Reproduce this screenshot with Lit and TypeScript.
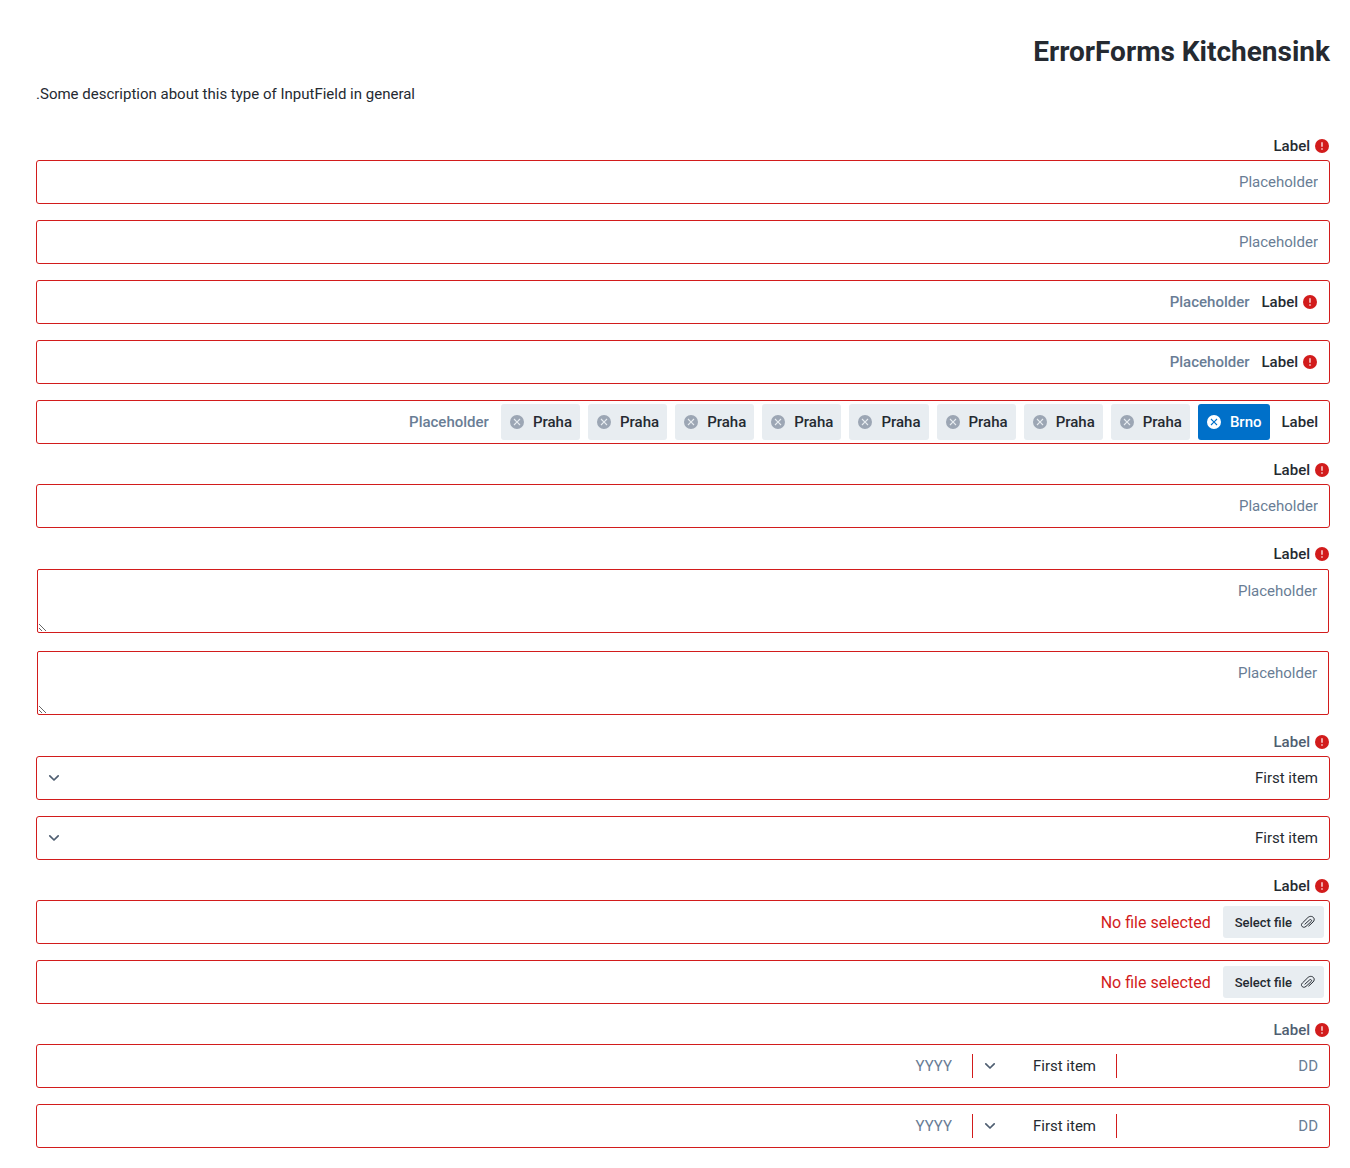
import { LitElement, html, css, nothing } from "lit";
import { customElement, property } from "lit/decorators.js";

const alertIcon = html`<svg class="icon alert" viewBox="0 0 24 24" aria-hidden="true">
  <circle cx="12" cy="12" r="10.5" fill="currentColor" />
  <path d="M12 6.5v6.8M12 15.2v2.3" stroke="#fff" stroke-opacity="0.85" stroke-width="2.2" fill="none" />
</svg>`;

const closeIcon = html`<svg class="icon" viewBox="0 0 24 24" aria-hidden="true">
  <path
    fill="currentColor"
    fill-rule="evenodd"
    d="M12 1.5a10.5 10.5 0 1 0 0 21 10.5 10.5 0 0 0 0-21zM8.1 6.9 12 10.8l3.9-3.9 1.2 1.2-3.9 3.9 3.9 3.9-1.2 1.2-3.9-3.9-3.9 3.9-1.2-1.2 3.9-3.9-3.9-3.9z"
  />
</svg>`;

const chevronIcon = html`<svg class="chevron" viewBox="0 0 24 24" aria-hidden="true">
  <path
    d="M7.8 9.8 12 14l4.2-4.2"
    fill="none"
    stroke="currentColor"
    stroke-width="1.7"
    stroke-linecap="round"
    stroke-linejoin="round"
  />
</svg>`;

const clipIcon = html`<svg class="icon" viewBox="0 0 24 24" aria-hidden="true">
  <path
    d="M7.4 15.2l7-6.3c1.900-1.700 4.200.700 2.400 2.400l-7.800 7.300c-4 3.700-9.400-1.300-5.500-5L11.800 5.400c5.600-5.100 13 1.400 7.700 6.600l-6.400 6"
    fill="none"
    stroke="currentColor"
    stroke-width="1.5"
    stroke-linecap="round"
    stroke-linejoin="round"
  />
</svg>`;

type Kind = "text" | "textarea" | "select" | "file" | "date";

interface Field {
  kind: Kind;
  label?: string;
  inline?: boolean;
  noIcon?: boolean;
  tags?: string[];
}

const FIELDS: Field[] = [
  { kind: "text", label: "Label" },
  { kind: "text" },
  { kind: "text", label: "Label", inline: true },
  { kind: "text", label: "Label", inline: true },
  {
    kind: "text",
    label: "Label",
    inline: true,
    noIcon: true,
    tags: ["Brno", "Praha", "Praha", "Praha", "Praha", "Praha", "Praha", "Praha", "Praha"],
  },
  { kind: "text", label: "Label" },
  { kind: "textarea", label: "Label" },
  { kind: "textarea" },
  { kind: "select", label: "Label" },
  { kind: "select" },
  { kind: "file", label: "Label" },
  { kind: "file" },
  { kind: "date", label: "Label" },
  { kind: "date" },
];

@customElement("form-field")
export class FormField extends LitElement {
  @property({ attribute: false }) field: Field = { kind: "text" };

  static styles = css`
    :host {
      display: block;
      font-family: Roboto, "Liberation Sans", sans-serif;
      font-size: 15px;
      line-height: 20px;
      color: #252a31;
    }
    .field {
      display: flex;
      flex-direction: column;
      gap: 4px;
    }
    .label {
      display: flex;
      align-items: center;
      gap: 4px;
      font-weight: 500;
      white-space: nowrap;
    }
    .label.light {
      color: #4f5e71;
    }
    .icon {
      display: block;
      flex: none;
      width: 16px;
      height: 16px;
    }
    .alert {
      color: #d21c1c;
    }
    .box {
      display: flex;
      align-items: center;
      box-sizing: border-box;
      min-height: 44px;
      border: 1px solid #d21c1c;
      border-radius: 3px;
      background: #fff;
    }
    .box.inline {
      padding-inline-start: 11px;
    }
    input,
    select,
    textarea,
    button {
      font: inherit;
      color: inherit;
      margin: 0;
    }
    input,
    select {
      box-sizing: border-box;
      width: 100%;
      min-width: 0;
      height: 42px;
      padding: 0 11px;
      border: 0;
      background: none;
      outline: none;
      appearance: none;
    }
    .inline input {
      flex: 1;
      padding-inline-start: 12px;
      font-weight: 500;
    }
    ::placeholder {
      color: #697d95;
      opacity: 1;
    }
    textarea {
      display: block;
      box-sizing: border-box;
      margin: 1px;
      padding: 11px;
      border: 1px solid #d21c1c;
      border-radius: 2px;
      background: #fff;
      outline: none;
      resize: vertical;
    }
    .picker {
      display: grid;
      align-items: center;
      width: 100%;
    }
    .picker select,
    .chevron {
      grid-area: 1 / 1;
    }
    .chevron {
      justify-self: end;
      width: 24px;
      height: 24px;
      margin-inline-end: 5px;
      color: #4f5e71;
      pointer-events: none;
    }
    .tags {
      display: flex;
      gap: 8px;
      padding-inline-start: 12px;
    }
    .tag {
      display: flex;
      align-items: center;
      gap: 8px;
      height: 36px;
      box-sizing: border-box;
      padding: 0 8px;
      border-radius: 3px;
      background: #e8edf1;
      font-weight: 500;
    }
    .tag.selected {
      background: #0070c9;
      color: #fff;
    }
    .remove {
      padding: 0;
      border: 0;
      background: none;
      color: #9ca6b4;
      cursor: pointer;
    }
    .selected .remove {
      color: #fff;
    }
    .file {
      gap: 12px;
      padding-inline-start: 5px;
      line-height: normal;
    }
    .choose {
      display: flex;
      align-items: center;
      gap: 8px;
      height: 32px;
      padding: 0 8px;
      padding-inline-end: 12px;
      border: 0;
      border-radius: 3px;
      background: #e8edf1;
      font-size: 13px;
      font-weight: 500;
      cursor: pointer;
    }
    .filename {
      font-size: 16px;
      color: #d21c1c;
    }
    .date {
      display: grid;
      grid-template-columns: 212px 144px 1fr;
    }
    .part {
      display: flex;
      align-items: center;
      height: 24px;
    }
    .part + .part {
      border-inline-start: 1px solid #d21c1c;
    }
    .part + .part input,
    .part + .part select {
      padding-inline-start: 20px;
    }
  `;

  private labelView() {
    const { label, kind, noIcon } = this.field;
    if (!label) return nothing;
    const light = kind === "select" || kind === "date";
    return html`<label class="label ${light ? "light" : ""}" for="control">
      ${noIcon ? nothing : alertIcon}<span>${label}</span>
    </label>`;
  }

  private pickerView(id: string, name: string) {
    return html`<div class="picker">
      <select id=${id} aria-label=${name}>
        <option>First item</option>
      </select>
      ${chevronIcon}
    </div>`;
  }

  private tagsView(tags: string[]) {
    return html`<div class="tags">
      ${tags.map(
        (tag, i) => html`<span class="tag ${i === 0 ? "selected" : ""}">
          <span>${tag}</span>
          <button class="remove" type="button" aria-label="Remove ${tag}">${closeIcon}</button>
        </span>`
      )}
    </div>`;
  }

  private controlView() {
    const { kind, inline, tags } = this.field;
    switch (kind) {
      case "textarea":
        return html`<textarea id="control" rows="2" placeholder="Placeholder" aria-label="Label"></textarea>`;
      case "select":
        return html`<div class="box">${this.pickerView("control", "Label")}</div>`;
      case "file":
        return html`<div class="box file">
          <button id="control" class="choose" type="button">${clipIcon}<span>Select file</span></button>
          <span class="filename">No file selected</span>
        </div>`;
      case "date":
        return html`<div class="box date">
          <div class="part"><input id="control" placeholder="DD" aria-label="Day" /></div>
          <div class="part">${this.pickerView("month", "Month")}</div>
          <div class="part"><input placeholder="YYYY" aria-label="Year" /></div>
        </div>`;
      default:
        return html`<div class="box ${inline ? "inline" : ""}">
          ${inline ? this.labelView() : nothing} ${tags ? this.tagsView(tags) : nothing}
          <input id="control" placeholder="Placeholder" aria-label="Label" />
        </div>`;
    }
  }

  render() {
    return html`<div class="field">
      ${this.field.inline ? nothing : this.labelView()} ${this.controlView()}
    </div>`;
  }
}

@customElement("app-root")
export class AppRoot extends LitElement {
  static styles = css`
    :host {
      display: block;
      font-family: Roboto, "Liberation Sans", sans-serif;
      color: #252a31;
      background: #fff;
    }
    .page {
      padding: 36px 20px 20px 36px;
    }
    .title {
      margin: 0;
      font-size: 28px;
      line-height: 32px;
      font-weight: 700;
    }
    .description {
      margin: 16px 0 32px;
      font-size: 15px;
      line-height: 20px;
      text-align: left;
    }
    .fields {
      display: flex;
      flex-direction: column;
      gap: 16px;
    }
  `;

  render() {
    return html`<main class="page" dir="rtl">
      <h1 class="title">ErrorForms Kitchensink</h1>
      <p class="description">Some description about this type of InputField in general.</p>
      <div class="fields">
        ${FIELDS.map((field) => html`<form-field .field=${field}></form-field>`)}
      </div>
    </main>`;
  }
}
